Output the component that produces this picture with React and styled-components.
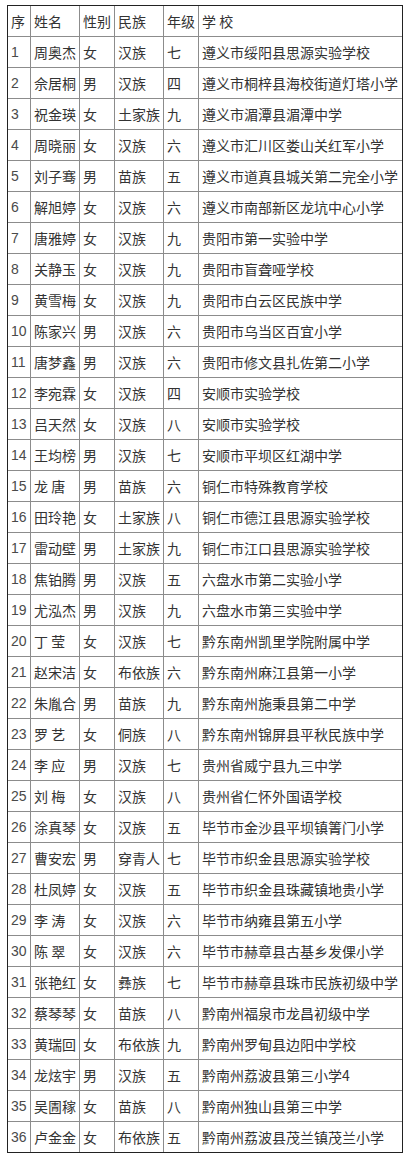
import React from "react";
import styled, { createGlobalStyle } from "styled-components";

const rows = [
    ["1", "周奥杰", "女", "汉族", "七", "遵义市绥阳县思源实验学校"],
    ["2", "佘居桐", "男", "汉族", "四", "遵义市桐梓县海校街道灯塔小学"],
    ["3", "祝金瑛", "女", "土家族", "九", "遵义市湄潭县湄潭中学"],
    ["4", "周晓丽", "女", "汉族", "六", "遵义市汇川区娄山关红军小学"],
    ["5", "刘子骞", "男", "苗族", "五", "遵义市道真县城关第二完全小学"],
    ["6", "解旭婷", "女", "汉族", "六", "遵义市南部新区龙坑中心小学"],
    ["7", "唐雅婷", "女", "汉族", "九", "贵阳市第一实验中学"],
    ["8", "关静玉", "女", "汉族", "九", "贵阳市盲聋哑学校"],
    ["9", "黄雪梅", "女", "汉族", "九", "贵阳市白云区民族中学"],
    ["10", "陈家兴", "男", "汉族", "六", "贵阳市乌当区百宜小学"],
    ["11", "唐梦鑫", "男", "汉族", "六", "贵阳市修文县扎佐第二小学"],
    ["12", "李宛霖", "女", "汉族", "四", "安顺市实验学校"],
    ["13", "吕天然", "女", "汉族", "八", "安顺市实验学校"],
    ["14", "王均榜", "男", "汉族", "七", "安顺市平坝区红湖中学"],
    ["15", "龙 唐", "男", "苗族", "六", "铜仁市特殊教育学校"],
    ["16", "田玲艳", "女", "土家族", "八", "铜仁市德江县思源实验学校"],
    ["17", "雷动壁", "男", "土家族", "九", "铜仁市江口县思源实验学校"],
    ["18", "焦铂腾", "男", "汉族", "五", "六盘水市第二实验小学"],
    ["19", "尤泓杰", "男", "汉族", "九", "六盘水市第三实验中学"],
    ["20", "丁 莹", "女", "汉族", "七", "黔东南州凯里学院附属中学"],
    ["21", "赵宋洁", "女", "布依族", "六", "黔东南州麻江县第一小学"],
    ["22", "朱胤合", "男", "苗族", "九", "黔东南州施秉县第二中学"],
    ["23", "罗 艺", "女", "侗族", "八", "黔东南州锦屏县平秋民族中学"],
    ["24", "李 应", "男", "汉族", "七", "贵州省威宁县九三中学"],
    ["25", "刘 梅", "女", "汉族", "八", "贵州省仁怀外国语学校"],
    ["26", "涂真琴", "女", "汉族", "五", "毕节市金沙县平坝镇箐门小学"],
    ["27", "曹安宏", "男", "穿青人", "七", "毕节市织金县思源实验学校"],
    ["28", "杜凤婷", "女", "汉族", "五", "毕节市织金县珠藏镇地贵小学"],
    ["29", "李 涛", "女", "汉族", "六", "毕节市纳雍县第五小学"],
    ["30", "陈 翠", "女", "汉族", "六", "毕节市赫章县古基乡发倮小学"],
    ["31", "张艳红", "女", "彝族", "七", "毕节市赫章县珠市民族初级中学"],
    ["32", "蔡琴琴", "女", "苗族", "八", "黔南州福泉市龙昌初级中学"],
    ["33", "黄瑞回", "女", "布依族", "九", "黔南州罗甸县边阳中学校"],
    ["34", "龙炫宇", "男", "汉族", "五", "黔南州荔波县第三小学4"],
    ["35", "吴圊稼", "女", "苗族", "八", "黔南州独山县第三中学"],
    ["36", "卢金金", "女", "布依族", "五", "黔南州荔波县茂兰镇茂兰小学"],
];

const headers = ["序", "姓名", "性别", "民族", "年级", "学 校"];
const widths = [22, 48, 34, 48, 34, 203];

const GlobalStyle = createGlobalStyle`
    body {
        margin: 0;
        background: #ffffff;
        font-family: "Noto Sans CJK SC", "Liberation Sans", sans-serif;
    }
`;

const Page = styled.div`
    padding: 5px 0 0 7px;
`;

const Table = styled.table`
    border: 1px solid #222222;
    border-collapse: separate;
    border-spacing: 0;
    table-layout: fixed;
    font-size: 14px;
    color: #333333;
`;

const Cell = styled.td`
    height: 30px;
    padding: 0 3px;
    box-sizing: border-box;
    white-space: nowrap;
    overflow: hidden;
    vertical-align: middle;
    line-height: 30px;
    border-right: 1px solid #8c8c8c;
    border-bottom: 1px solid #8c8c8c;
    font-family: ${({ $num }) =>
        $num ? '"Liberation Sans", Arial, sans-serif' : '"Noto Sans CJK SC", sans-serif'};
    color: ${({ $num }) => ($num ? "#4a4a4a" : "#333333")};

    &:last-child {
        border-right: none;
    }

    tr:last-child > & {
        border-bottom: none;
    }
`;

const App = () => {
    return (
        <>
            <GlobalStyle />
            <Page>
                <Table>
                    <colgroup>
                        {widths.map((w, i) => (
                            <col key={i} style={{ width: w + (i < 5 ? 1 : 0) }} />
                        ))}
                    </colgroup>
                    <tbody>
                        <tr>
                            {headers.map((h) => (
                                <Cell key={h}>{h}</Cell>
                            ))}
                        </tr>
                        {rows.map((r) => (
                            <tr key={r[0]}>
                                {r.map((c, i) => (
                                    <Cell key={i} $num={i === 0}>
                                        {c}
                                    </Cell>
                                ))}
                            </tr>
                        ))}
                    </tbody>
                </Table>
            </Page>
        </>
    );
};

export default App;
